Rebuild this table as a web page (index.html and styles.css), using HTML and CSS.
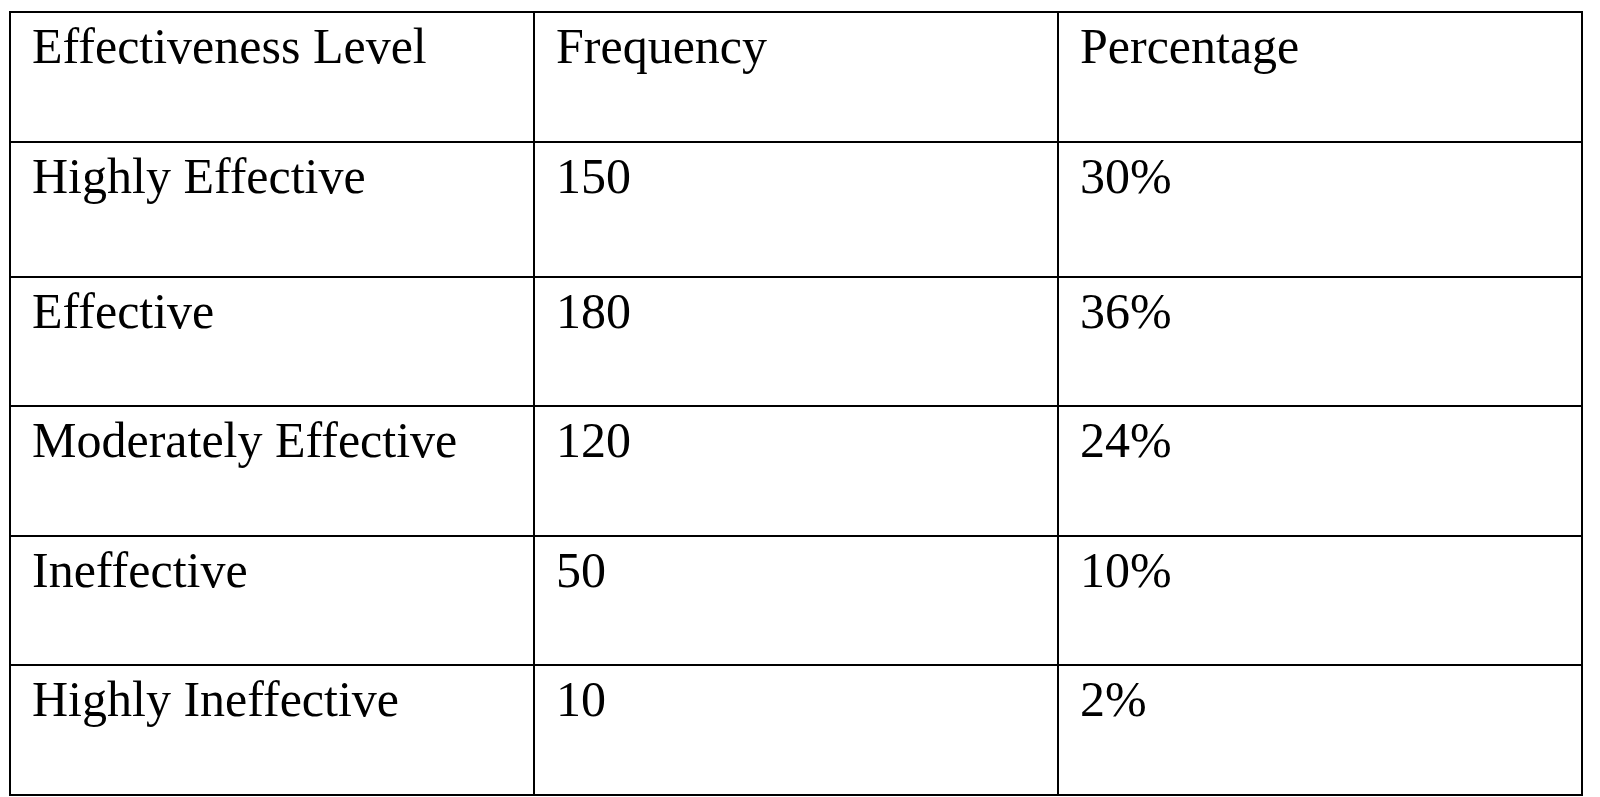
FILE: index.html
```html
<!DOCTYPE html>
<html lang="en">
<head>
<meta charset="utf-8">
<title>Effectiveness Levels</title>
<link rel="stylesheet" href="styles.css">
</head>
<body>
<table class="data-table">
  <tbody>
    <tr class="row row-1">
      <td class="cell">Effectiveness Level</td>
      <td class="cell">Frequency</td>
      <td class="cell">Percentage</td>
    </tr>
    <tr class="row row-2">
      <td class="cell">Highly Effective</td>
      <td class="cell">150</td>
      <td class="cell">30%</td>
    </tr>
    <tr class="row row-3">
      <td class="cell">Effective</td>
      <td class="cell">180</td>
      <td class="cell">36%</td>
    </tr>
    <tr class="row row-4">
      <td class="cell">Moderately Effective</td>
      <td class="cell">120</td>
      <td class="cell">24%</td>
    </tr>
    <tr class="row row-5">
      <td class="cell">Ineffective</td>
      <td class="cell">50</td>
      <td class="cell">10%</td>
    </tr>
    <tr class="row row-6">
      <td class="cell">Highly Ineffective</td>
      <td class="cell">10</td>
      <td class="cell">2%</td>
    </tr>
  </tbody>
</table>
</body>
</html>
```

FILE: styles.css
```css
html, body {
  margin: 0;
  padding: 0;
  background: #ffffff;
}

body {
  padding: 11px 0 0 9px;
  font-family: "Liberation Serif", "Times New Roman", serif;
  color: #000000;
}

.data-table {
  border-collapse: separate;
  border-spacing: 0;
  border-top: 2px solid #000;
  border-left: 2px solid #000;
  table-layout: fixed;
  width: 1574px;
}

.cell {
  width: 501px;
  border-right: 2px solid #000;
  border-bottom: 2px solid #000;
  padding: 6px 0 0 21px;
  vertical-align: top;
  font-size: 50px;
  line-height: 55px;
  white-space: nowrap;
}

.row-1 { height: 130px; }
.row-2 { height: 135px; }
.row-3 { height: 129px; }
.row-4 { height: 130px; }
.row-5 { height: 129px; }
.row-6 { height: 130px; }
```
